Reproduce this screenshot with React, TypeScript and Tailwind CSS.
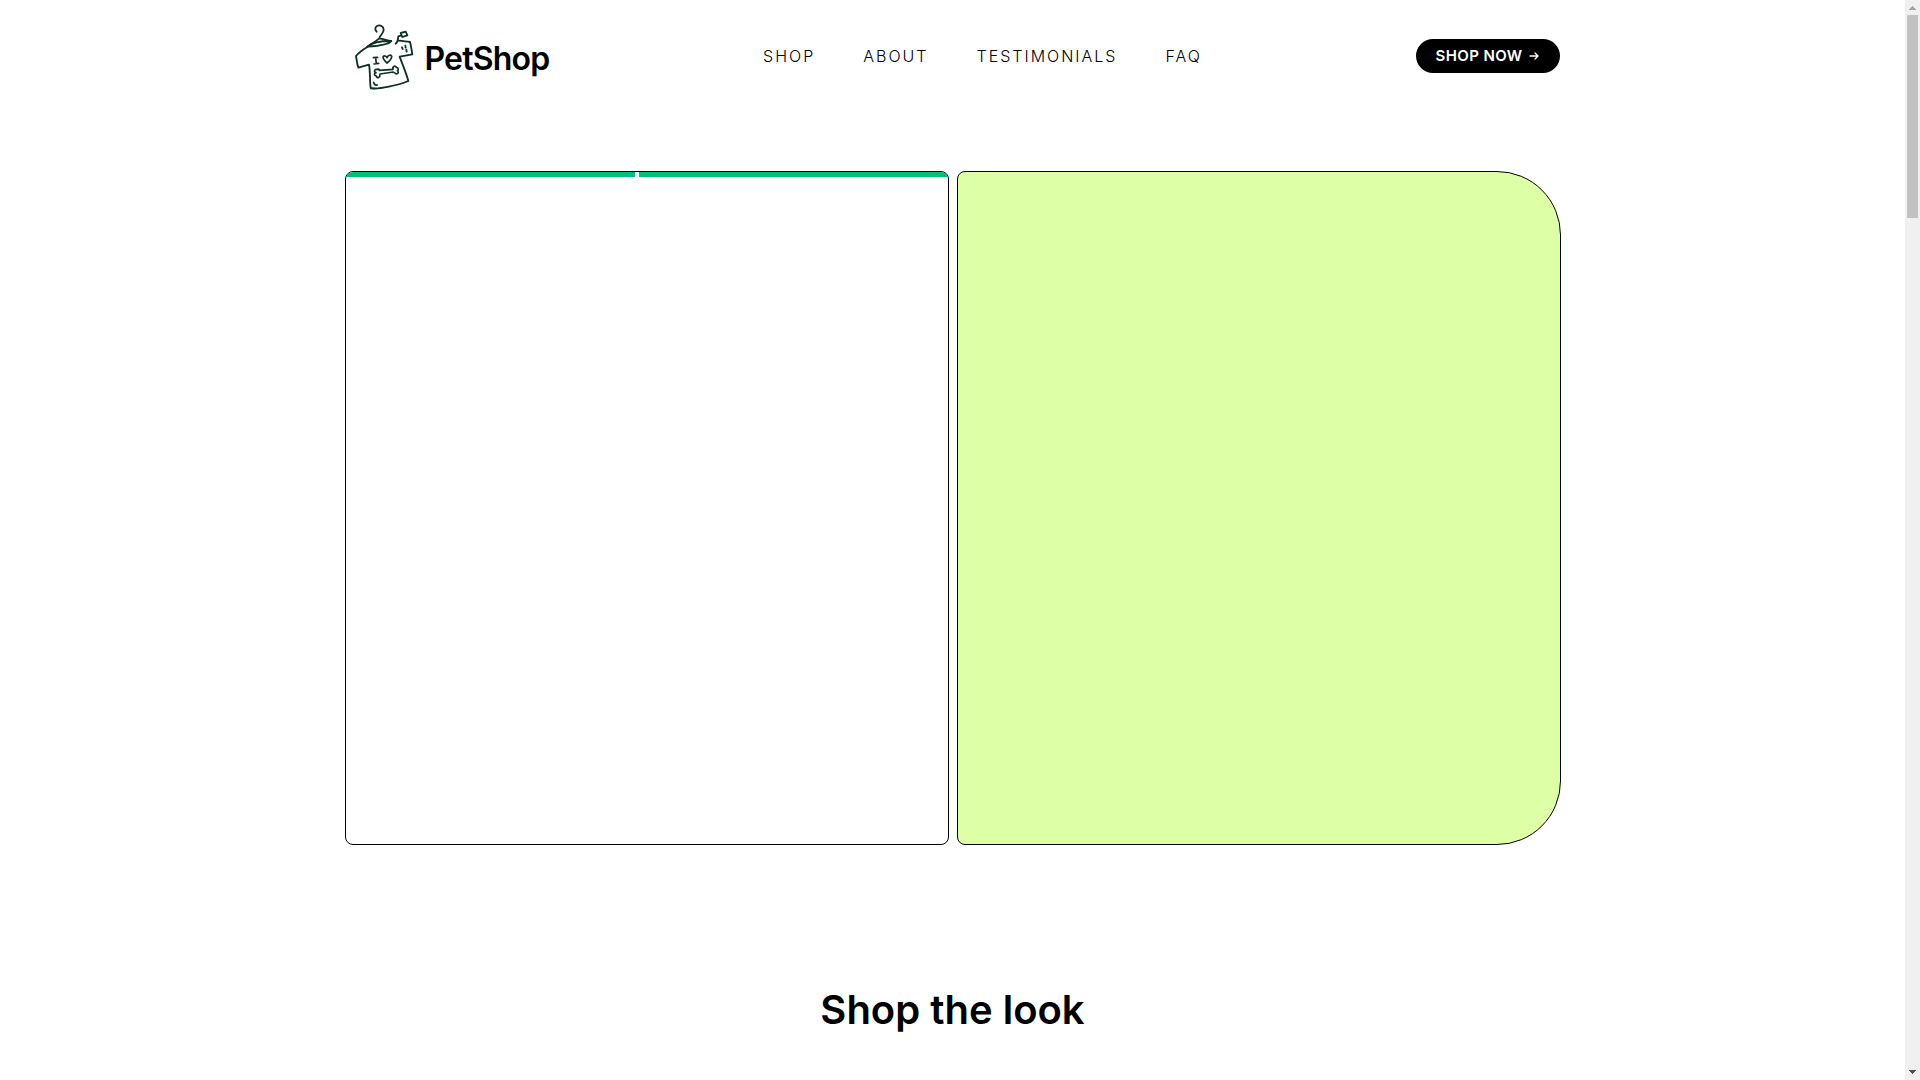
import React from "react";

const links = [
  { label: "SHOP", href: "#shop" },
  { label: "ABOUT", href: "#about" },
  { label: "TESTIMONIALS", href: "#testimonials" },
  { label: "FAQ", href: "#faq" },
];

function ShirtIcon() {
  return (
    <svg
      viewBox="0 0 210 225"
      className="h-[75px] w-[70px] shrink-0"
      fill="none"
      stroke="#0b3024"
      strokeWidth="5.5"
      strokeLinecap="round"
      strokeLinejoin="round"
      aria-hidden="true"
    >
      <path d="M80 38C75 34 74 25 81 21C90 16 101 22 101 32C101 44 89 49 88 58C78 67 65 74 52 83" />
      <path d="M88 58C101 60 113 66 123 66" />
      <path d="M53 83C67 69 100 66 124 66C117 77 83 81 53 83Z" />
      <path d="M53 83C40 91 26 101 18 111C20 123 21 135 25 146L57 137C61 158 59 184 62 207C82 213 150 197 175 186C168 160 157 136 149 113L187 106C185 93 183 80 180 69C168 67 156 66 144 65" />
      <path d="M137 74C145 68 144 58 145 52L154 49" />
      <path d="M152 42L167 38L172 49L157 54Z" />
      <path d="M156 85L158 90M166 80L167 86M169 92L170 98" />
      <path d="M70 116L83 115M77 116L79 134M72 135L86 133" strokeWidth="5" />
      <path d="M111 132C105 125 98 121 99 114C101 108 109 111 111 116C114 108 123 106 125 112C126 120 117 127 111 132Z" strokeWidth="5" />
      <path d="M88 154L129 151C126 142 136 139 139 145C147 146 145 154 142 155C149 160 141 168 136 163C133 162 131 161 130 159L90 165C91 176 81 180 79 171C71 170 72 162 78 161C70 157 75 149 81 152C84 149 87 150 88 154Z" strokeWidth="5" />
      <path d="M71 190C72 196 76 199 82 198" strokeWidth="5" />
    </svg>
  );
}

function Header() {
  return (
    <header className="flex h-28 items-center justify-between">
      <a href="#home" className="flex items-center gap-[5px] pl-[5px]">
        <ShirtIcon />
        <span className="pt-1.5 text-[32px] leading-10 font-semibold tracking-tight">PetShop</span>
      </a>
      <nav aria-label="Main" className="flex gap-12 text-base font-light tracking-[2px]">
        {links.map((link) => (
          <a key={link.label} href={link.href}>
            {link.label}
          </a>
        ))}
      </nav>
      <button
        type="button"
        className="flex h-[34px] items-center gap-1.5 rounded-full bg-black px-5 text-[15px] font-semibold tracking-wide text-white"
      >
        SHOP NOW
        <svg
          viewBox="0 0 12 12"
          className="h-3 w-3"
          fill="none"
          stroke="currentColor"
          strokeWidth="1.3"
          strokeLinecap="round"
          strokeLinejoin="round"
          aria-hidden="true"
        >
          <path d="M2 6H10M7 3L10 6L7 9" />
        </svg>
      </button>
    </header>
  );
}

function ScrollRail() {
  return (
    <div aria-hidden="true" className="flex w-[15px] shrink-0 flex-col items-center bg-[#f0f0f0]">
      <svg viewBox="0 0 15 15" className="h-[15px] w-[15px]" fill="#a3a3a3" shapeRendering="crispEdges">
        <path d="M4 10L7.500 6L11 10Z" />
      </svg>
      <div className="h-[203px] w-[11px] bg-[#c1c1c1]" />
      <svg viewBox="0 0 15 15" className="mt-auto h-[15px] w-[15px]" fill="#505050" shapeRendering="crispEdges">
        <path d="M4 5L7.500 9L11 5Z" />
      </svg>
    </div>
  );
}

export default function App() {
  return (
    <div className="flex min-h-screen bg-white font-['Inter',sans-serif] text-black">
      <div className="min-w-0 flex-1">
        <div className="mx-auto max-w-7xl px-8">
          <Header />
          <main>
            <section aria-label="Featured" className="mt-[59px] grid grid-cols-2 gap-2">
              <div className="h-[674px] overflow-hidden rounded-lg border border-black">
                <div className="flex h-[5px] gap-1">
                  <div className="flex-[289] bg-[#04bf7b]" />
                  <div className="flex-[309] bg-[#04bf7b]" />
                </div>
              </div>
              <div className="h-[674px] rounded-l-lg rounded-r-[64px] border border-black bg-[#ddffa6]" />
            </section>
            <section id="shop" className="pt-[140px]">
              <h2 className="text-center text-[40px] leading-[50px] font-semibold">
                Shop the look
              </h2>
            </section>
          </main>
        </div>
      </div>
      <ScrollRail />
    </div>
  );
}
